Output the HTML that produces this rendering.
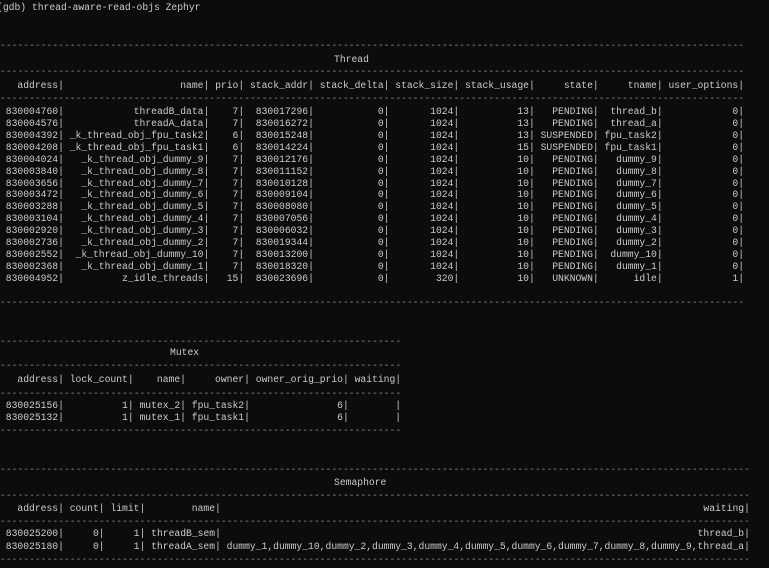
<!DOCTYPE html>
<html><head><meta charset="utf-8"><style>
html,body{margin:0;padding:0;background:#0c0c0c;width:769px;height:568px;overflow:hidden}
body{position:relative;font-family:"Liberation Mono",monospace;font-size:9.7px;color:#cccccc}
.r{position:absolute;left:0;white-space:pre;height:12px;line-height:12px}
.d{color:#8a8a8a}
.r span{display:inline-block;text-align:right;white-space:pre}
.a{width:11ch}.n{width:25ch}.p{width:6ch}.s{width:12ch}.t{width:13ch}.st{width:11ch}
.m2{width:12ch}.m3{width:9ch}.m4{width:11ch}.m5{width:17ch}.m6{width:9ch}
.s2{width:7ch}.s4{width:13ch}.s5{width:91ch}
</style></head><body>
<div class="r" style="top:2px;left:-3px">(gdb) thread-aware-read-objs Zephyr</div>

<div class="r d" style="top:40px">--------------------------------------------------------------------------------------------------------------------------------</div>
<div class="r" style="top:54px;left:334px">Thread</div>
<div class="r d" style="top:66px">--------------------------------------------------------------------------------------------------------------------------------</div>
<div class="r" style="top:80px"><span class="a">address|</span><span class="n">name|</span><span class="p">prio|</span><span class="s">stack_addr|</span><span class="t">stack_delta|</span><span class="s">stack_size|</span><span class="t">stack_usage|</span><span class="st">state|</span><span class="st">tname|</span><span style="width:14ch">user_options|</span></div>
<div class="r d" style="top:93px">--------------------------------------------------------------------------------------------------------------------------------</div>

<div class="r" style="top:106px"><span class="a">830004760|</span><span class="n">threadB_data|</span><span class="p">7|</span><span class="s">830017296|</span><span class="t">0|</span><span class="s">1024|</span><span class="t">13|</span><span class="st">PENDING|</span><span class="st">thread_b|</span><span style="width:14ch">0|</span></div>
<div class="r" style="top:118px"><span class="a">830004576|</span><span class="n">threadA_data|</span><span class="p">7|</span><span class="s">830016272|</span><span class="t">0|</span><span class="s">1024|</span><span class="t">13|</span><span class="st">PENDING|</span><span class="st">thread_a|</span><span style="width:14ch">0|</span></div>
<div class="r" style="top:130px"><span class="a">830004392|</span><span class="n">_k_thread_obj_fpu_task2|</span><span class="p">6|</span><span class="s">830015248|</span><span class="t">0|</span><span class="s">1024|</span><span class="t">13|</span><span class="st">SUSPENDED|</span><span class="st">fpu_task2|</span><span style="width:14ch">0|</span></div>
<div class="r" style="top:142px"><span class="a">830004208|</span><span class="n">_k_thread_obj_fpu_task1|</span><span class="p">6|</span><span class="s">830014224|</span><span class="t">0|</span><span class="s">1024|</span><span class="t">15|</span><span class="st">SUSPENDED|</span><span class="st">fpu_task1|</span><span style="width:14ch">0|</span></div>
<div class="r" style="top:154px"><span class="a">830004024|</span><span class="n">_k_thread_obj_dummy_9|</span><span class="p">7|</span><span class="s">830012176|</span><span class="t">0|</span><span class="s">1024|</span><span class="t">10|</span><span class="st">PENDING|</span><span class="st">dummy_9|</span><span style="width:14ch">0|</span></div>
<div class="r" style="top:166px"><span class="a">830003840|</span><span class="n">_k_thread_obj_dummy_8|</span><span class="p">7|</span><span class="s">830011152|</span><span class="t">0|</span><span class="s">1024|</span><span class="t">10|</span><span class="st">PENDING|</span><span class="st">dummy_8|</span><span style="width:14ch">0|</span></div>
<div class="r" style="top:178px"><span class="a">830003656|</span><span class="n">_k_thread_obj_dummy_7|</span><span class="p">7|</span><span class="s">830010128|</span><span class="t">0|</span><span class="s">1024|</span><span class="t">10|</span><span class="st">PENDING|</span><span class="st">dummy_7|</span><span style="width:14ch">0|</span></div>
<div class="r" style="top:189px"><span class="a">830003472|</span><span class="n">_k_thread_obj_dummy_6|</span><span class="p">7|</span><span class="s">830009104|</span><span class="t">0|</span><span class="s">1024|</span><span class="t">10|</span><span class="st">PENDING|</span><span class="st">dummy_6|</span><span style="width:14ch">0|</span></div>
<div class="r" style="top:201px"><span class="a">830003288|</span><span class="n">_k_thread_obj_dummy_5|</span><span class="p">7|</span><span class="s">830008080|</span><span class="t">0|</span><span class="s">1024|</span><span class="t">10|</span><span class="st">PENDING|</span><span class="st">dummy_5|</span><span style="width:14ch">0|</span></div>
<div class="r" style="top:213px"><span class="a">830003104|</span><span class="n">_k_thread_obj_dummy_4|</span><span class="p">7|</span><span class="s">830007056|</span><span class="t">0|</span><span class="s">1024|</span><span class="t">10|</span><span class="st">PENDING|</span><span class="st">dummy_4|</span><span style="width:14ch">0|</span></div>
<div class="r" style="top:225px"><span class="a">830002920|</span><span class="n">_k_thread_obj_dummy_3|</span><span class="p">7|</span><span class="s">830006032|</span><span class="t">0|</span><span class="s">1024|</span><span class="t">10|</span><span class="st">PENDING|</span><span class="st">dummy_3|</span><span style="width:14ch">0|</span></div>
<div class="r" style="top:237px"><span class="a">830002736|</span><span class="n">_k_thread_obj_dummy_2|</span><span class="p">7|</span><span class="s">830019344|</span><span class="t">0|</span><span class="s">1024|</span><span class="t">10|</span><span class="st">PENDING|</span><span class="st">dummy_2|</span><span style="width:14ch">0|</span></div>
<div class="r" style="top:249px"><span class="a">830002552|</span><span class="n">_k_thread_obj_dummy_10|</span><span class="p">7|</span><span class="s">830013200|</span><span class="t">0|</span><span class="s">1024|</span><span class="t">10|</span><span class="st">PENDING|</span><span class="st">dummy_10|</span><span style="width:14ch">0|</span></div>
<div class="r" style="top:261px"><span class="a">830002368|</span><span class="n">_k_thread_obj_dummy_1|</span><span class="p">7|</span><span class="s">830018320|</span><span class="t">0|</span><span class="s">1024|</span><span class="t">10|</span><span class="st">PENDING|</span><span class="st">dummy_1|</span><span style="width:14ch">0|</span></div>
<div class="r" style="top:273px"><span class="a">830004952|</span><span class="n">z_idle_threads|</span><span class="p">15|</span><span class="s">830023696|</span><span class="t">0|</span><span class="s">320|</span><span class="t">10|</span><span class="st">UNKNOWN|</span><span class="st">idle|</span><span style="width:14ch">1|</span></div>
<div class="r" style="top:284px"><span class="a"> </span></div>
<div class="r d" style="top:297px">--------------------------------------------------------------------------------------------------------------------------------</div>

<div class="r d" style="top:336px">---------------------------------------------------------------------</div>
<div class="r" style="top:347px;left:170px">Mutex</div>
<div class="r d" style="top:360px">---------------------------------------------------------------------</div>
<div class="r" style="top:374px"><span class="a">address|</span><span class="m2">lock_count|</span><span class="m3">name|</span><span class="m4">owner|</span><span class="m5">owner_orig_prio|</span><span class="m6">waiting|</span></div>
<div class="r d" style="top:388px">---------------------------------------------------------------------</div>
<div class="r" style="top:400px"><span class="a">830025156|</span><span class="m2">1|</span><span class="m3">mutex_2|</span><span class="m4">fpu_task2|</span><span class="m5">6|</span><span class="m6">|</span></div>
<div class="r" style="top:412px"><span class="a">830025132|</span><span class="m2">1|</span><span class="m3">mutex_1|</span><span class="m4">fpu_task1|</span><span class="m5">6|</span><span class="m6">|</span></div>
<div class="r d" style="top:425px">---------------------------------------------------------------------</div>

<div class="r d" style="top:464px">---------------------------------------------------------------------------------------------------------------------------------</div>
<div class="r" style="top:477px;left:334px">Semaphore</div>
<div class="r d" style="top:490px">---------------------------------------------------------------------------------------------------------------------------------</div>
<div class="r" style="top:503px"><span class="a">address|</span><span class="s2">count|</span><span class="s2">limit|</span><span class="s4">name|</span><span class="s5">waiting|</span></div>
<div class="r d" style="top:516px">---------------------------------------------------------------------------------------------------------------------------------</div>
<div class="r" style="top:528px"><span class="a">830025200|</span><span class="s2">0|</span><span class="s2">1|</span><span class="s4" style="text-align:left"> threadB_sem|</span><span class="s5">thread_b|</span></div>
<div class="r" style="top:541px"><span class="a">830025180|</span><span class="s2">0|</span><span class="s2">1|</span><span class="s4">threadA_sem|</span><span class="s5">dummy_1,dummy_10,dummy_2,dummy_3,dummy_4,dummy_5,dummy_6,dummy_7,dummy_8,dummy_9,thread_a|</span></div>
<div class="r d" style="top:554px">---------------------------------------------------------------------------------------------------------------------------------</div>
</body></html>
